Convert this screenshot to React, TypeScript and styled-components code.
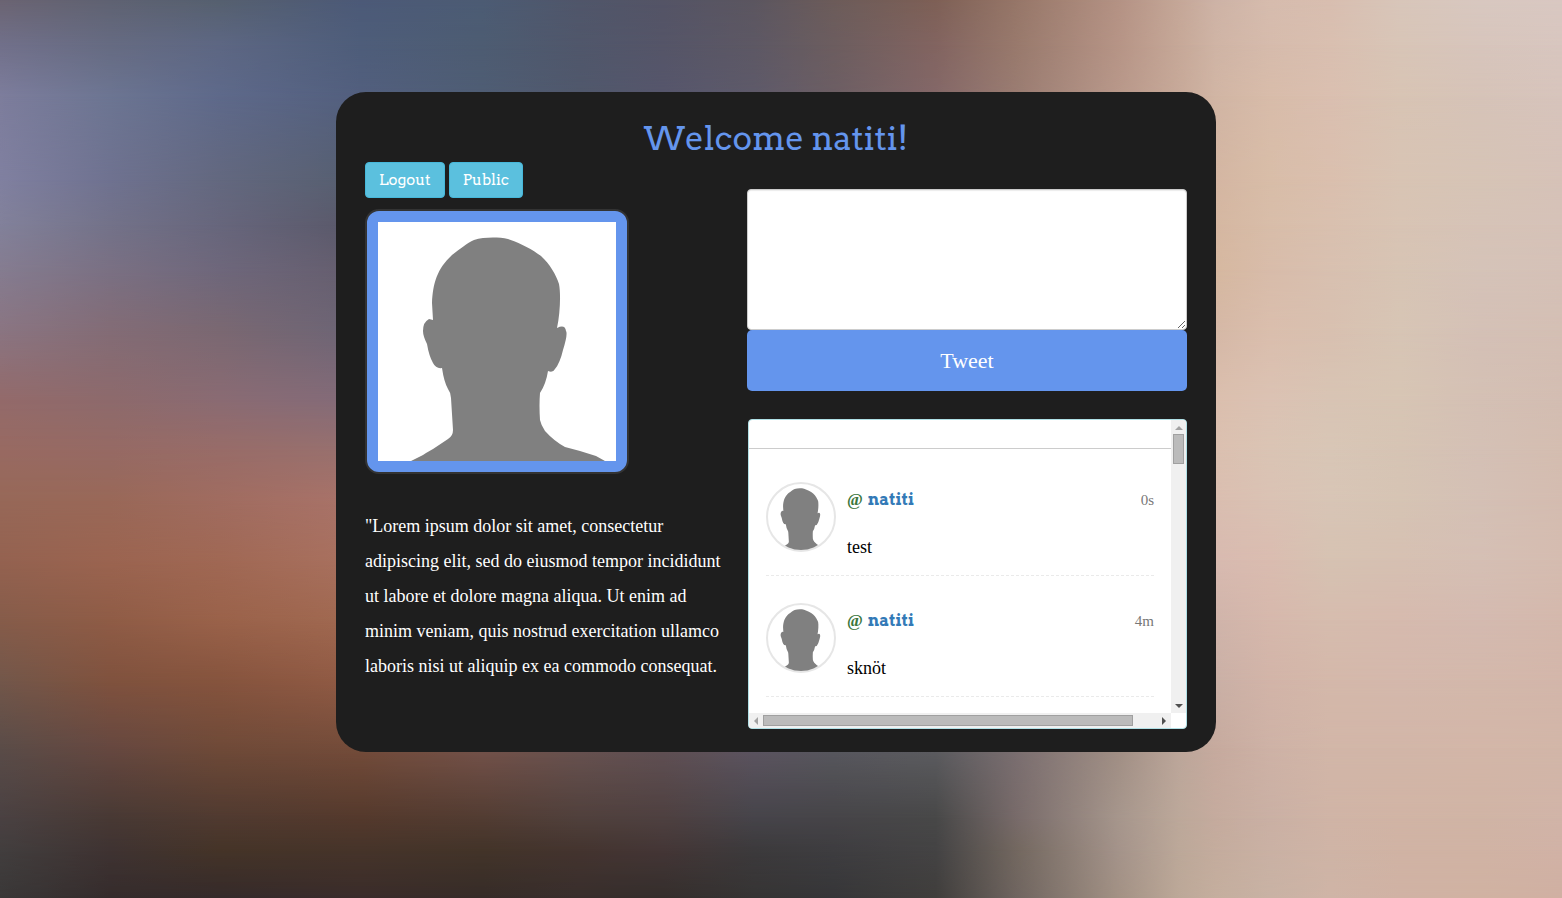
import React from "react";
import styled, { createGlobalStyle } from "styled-components";

const serif = '"Liberation Serif", "Times New Roman", serif';
const slab = 'Arvo, "DejaVu Serif", serif';

const GlobalStyle = createGlobalStyle`
  *, *::before, *::after { box-sizing: border-box; }
  body { margin: 0; font-family: ${serif}; background: #5c5460; }
  button, textarea { font-family: inherit; }
`;

/* Colour rows of the blurred backdrop: vertical position, horizontal stops, colours (px in a 1562x898 frame). */
type Row = { y: number; xs: number[]; colors: string };
const full = [0, 110, 220, 360, 482, 579, 663, 754, 833, 936, 1015, 1118, 1179, 1216, 1270, 1330, 1400, 1480, 1562];
const sides = [0, 110, 220, 336, 1216, 1270, 1330, 1400, 1480, 1562];
const rows: Row[] = [
  { y: 0, xs: full, colors: "6b6472 5f6272 56606f 4c5a78 4c5c74 50566a 545466 5c5660 6c5c5a 7e6056 967668 b49284 c5a798 ceb3a6 d6bcae d8beb0 d8c6ba d8c8c0 d9c8c2" },
  { y: 45, xs: full, colors: "71708a 666b82 5d6783 4e5d7a 4d5c72 50576b 555568 5d5864 6c5d5f 826460 98796c b69486 c6a898 cfb4a5 d6bbac d9bfb0 d8c5b7 d7c5bc d8c6bf" },
  { y: 96, xs: full, colors: "7d7d9c 6c7592 5e698a 525f7e 4f5d74 50586c 56566c 5e5a6a 6c5e64 846868 9a7c72 b8988a c7a999 d1b5a4 d8bcaa dabfb0 d8c4b4 d6c3b8 d7c4bc" },
  { y: 180, xs: sides, colors: "8080a0 6f7290 63687f 586072 d4b6a2 d8bda8 dabfae d8c4b4 d6c4b6 d6c2b8" },
  { y: 225, xs: sides, colors: "82819a 737289 67667c 5b5a6c d5b7a1 d8bda9 d9c0af d8c4b4 d6c3b7 d6c2b8" },
  { y: 270, xs: sides, colors: "857c90 7a7083 6e677b 665f70 d6b8a0 d8bcaa d8c0b0 d7c4b4 d5c3b8 d5c1b7" },
  { y: 330, xs: sides, colors: "8a7582 836c76 7a6872 6e6575 d5b8a6 dabead d8c0b0 d7c5b5 d4c0b6 d4bfb4" },
  { y: 400, xs: sides, colors: "936a6a 8d6a6c 8a6b73 846b78 dbbfae dbc2b3 d8c4b4 d7c5b4 d4c0b4 d3bdb2" },
  { y: 450, xs: sides, colors: "986a62 966a64 986c68 98706e dbc0b0 dac4b4 d8c6b6 d6c4b4 d4c0b5 d4bdb0" },
  { y: 500, xs: sides, colors: "976858 996858 a06c60 a87268 dabeb0 dac2b4 d8c5b6 d6c4b4 d4c0b5 d4bcb0" },
  { y: 560, xs: sides, colors: "946250 9b6450 a06854 a8705e d8bab0 dabcb0 d6c2b2 d6c0b2 d5bfb4 d5bcb0" },
  { y: 620, xs: sides, colors: "865c4a 8f5c46 9a624a a06850 d0b4aa d6b8ac d6bcae d6baae d4bab0 d4b8ac" },
  { y: 680, xs: sides, colors: "73574a 80523e 86543e 905a44 cab0a6 d2b4a8 d4b8aa d4b8ac d3b8ab d3b6aa" },
  { y: 748, xs: full, colors: "5a4c48 664840 6f4a38 744c3a 74524a 685250 605054 5c5460 58585e 5c5c60 7a6e70 a08e84 bca69a c6aa9e ceb2a6 d2b6a8 d2b6a8 d3b6a8 d2b6a8" },
  { y: 818, xs: full, colors: "4a4142 483934 503a30 54392c 523c32 50403c 4e4040 46444a 464448 484848 776a69 a6968c bca89a c5ab9e cab0a4 d0b4a6 d1b4a5 d0b4a5 d1b4a8" },
  { y: 850, xs: full, colors: "423e3e 3f3332 453428 46342a 433429 44342f 443636 3c3a3c 3e3d40 444344 72675f a4938a bca899 c4ac9d cab1a4 cfb4a6 d0b3a4 d0b3a4 d1b2a6" },
  { y: 898, xs: full, colors: "3a3838 352c2c 352a2a 3a2c2a 362c28 382e2c 342e2c 363434 363638 403e3c 6e645f a29184 bca898 c4ae9e c8b2a4 ceb4a6 d0b2a4 d0b2a2 d0b0a2" },
];

const percent = (value: number, total: number) => ((value / total) * 100).toFixed(2) + "%";

const bandGradient = ({ xs, colors }: Row) => {
  const list = colors.split(" ");
  return `linear-gradient(to right, ${xs.map((x, i) => `#${list[i]} ${percent(x, 1562)}`).join(", ")})`;
};

const Backdrop = styled.div`
  position: fixed;
  inset: 0;
  z-index: -1;
  display: grid;
`;

const Band = styled.div<{ $row: Row; $from: number }>`
  grid-area: 1 / 1;
  background: ${({ $row }) => bandGradient($row)};
  ${({ $row, $from }) =>
    $row.y > 0 &&
    `mask-image: linear-gradient(to bottom, transparent ${percent($from, 898)}, #000 ${percent($row.y, 898)});`}
`;

const Page = styled.main`
  display: flex;
  justify-content: center;
  padding: 92px 10px 92px 0;
`;

const Card = styled.section`
  width: 100%;
  max-width: 880px;
  padding: 24px 29px 23px;
  border-radius: 30px;
  background: #1e1e1e;
`;

const Title = styled.h1`
  margin: 0 0 1px;
  font: 400 33px/45px ${slab};
  text-align: center;
  color: #6495ed;
`;

const Columns = styled.div`
  display: grid;
  grid-template-columns: minmax(0, 1fr) minmax(0, 440px);
  gap: 24px;
`;

const Nav = styled.nav`
  display: flex;
  gap: 4px;
`;

const NavButton = styled.button`
  height: 36px;
  padding: 0 13px;
  border: 1px solid #46b8da;
  border-radius: 4px;
  background: #5bc0de;
  color: #fff;
  font: 400 15px/20px ${slab};
`;

const Portrait = styled.div`
  width: 264px;
  margin-top: 11px;
  padding: 11px;
  border: 2px solid #333;
  border-radius: 14px;
  background: #6495ed;

  svg { display: block; width: 100%; background: #fff; }
`;

const Bio = styled.p`
  margin: 35px 0 0;
  font-size: 18px;
  line-height: 35px;
  color: #fff;
`;

const Side = styled.div`
  padding-top: 27px;
`;

const Form = styled.form`
  display: flex;
  flex-direction: column;
  margin-bottom: 28px;
`;

const Message = styled.textarea`
  height: 141px;
  padding: 6px 12px;
  border: 1px solid #ccc;
  border-radius: 4px;
  background: #fff;
  box-shadow: inset 0 1px 1px rgba(0, 0, 0, 0.08);
  font-size: 18px;
  resize: vertical;
`;

const TweetButton = styled.button`
  height: 61px;
  border: 0;
  border-radius: 5px;
  background: #6495ed;
  color: #fff;
  font-size: 22px;
`;

const Feed = styled.section`
  display: grid;
  grid-template: 293px 15px / minmax(0, 1fr) 15px;
  margin-left: 1px;
  border: 1px solid #b0e0e6;
  border-radius: 4px;
  background: #fff;
  overflow: hidden;
`;

const FeedView = styled.div`
  overflow: hidden;
`;

const FeedHead = styled.div`
  height: 29px;
  border-bottom: 1px solid #ccc;
`;

const Posts = styled.ul`
  margin: 0;
  padding: 6px 17px 0;
  list-style: none;
`;

const Post = styled.li`
  display: flex;
  gap: 11px;
  height: 121px;
  padding-top: 27px;
  border-bottom: 1px dashed #eaeaea;
`;

const Thumb = styled.div`
  flex: none;
  width: 70px;
  height: 70px;
  border: 2px solid #e6e6e6;
  border-radius: 50%;
  overflow: hidden;

  svg { display: block; width: 100%; height: 100%; }
`;

const PostBody = styled.div`
  flex: 1;
`;

const PostHead = styled.div`
  display: flex;
  align-items: baseline;
  padding-top: 6px;
  line-height: 24px;
`;

const At = styled.span`
  margin-right: 5px;
  font-size: 17px;
  font-weight: 700;
  color: #3c763d;
`;

const Author = styled.a`
  font: 700 16px/24px ${slab};
  color: #337ab7;
  text-decoration: none;
`;

const Age = styled.time`
  margin-left: auto;
  font-size: 15px;
  color: #777;
`;

const PostText = styled.p`
  margin: 23px 0 0;
  font-size: 18px;
  line-height: 24px;
  color: #000;
`;

const Track = styled.div<{ $vertical?: boolean }>`
  display: flex;
  flex-direction: ${({ $vertical }) => ($vertical ? "column" : "row")};
  align-items: center;
  background: #f0f0f0;
`;

const Arrow = styled.button`
  display: flex;
  align-items: center;
  justify-content: center;
  flex: none;
  width: 14px;
  height: 14px;
  padding: 0;
  border: 0;
  background: none;

  svg { display: block; }
`;

const Grip = styled.div<{ $vertical?: boolean }>`
  width: ${({ $vertical }) => ($vertical ? "11px" : "370px")};
  height: ${({ $vertical }) => ($vertical ? "30px" : "11px")};
  border: 1px solid #a0a0a0;
  background: #bbb;
`;

const Spacer = styled.div`
  flex: 1;
`;

const silhouette =
  "M33 239 L45 233 L48 231 L55 227 L70 217 Q75 214 75 208 L73 176 Q73 171 70 167 Q66 160 64 146 Q58 147 55 141 Q51 134 49 122 Q45 114 45 109 Q45 100 51 97 L55 98 L54 81 C55 61 59 47 74 33 C82 27 89 21 96 18 C106 15 120 15 130 17 C142 21 154 27 163 34 C172 42 178 53 181 62 C183 72 182 92 179 106 Q187 102 188 109 Q190 112 185 128 Q182 141 177 147 Q175 151 170 149 Q168 162 162 171 Q161 183 162 198 Q163 203 167 209 Q176 219 187 225 L202 229 L218 234 L227 239 Z";

const Silhouette = ({ label }: { label: string }) => (
  <svg viewBox="0 0 238 239" role="img" aria-label={label}>
    <path d={silhouette} fill="#808080" />
  </svg>
);

const arrowPaths = {
  up: "M4 1 L8 5 H0 Z",
  down: "M0 0 H8 L4 4 Z",
  left: "M0 4 L4 0 V8 Z",
  right: "M0 0 L4 4 L0 8 Z",
};

const ScrollArrow = ({ dir, color }: { dir: keyof typeof arrowPaths; color: string }) => {
  const upright = dir === "up" || dir === "down";
  return (
    <Arrow type="button" aria-label={`Scroll ${dir}`}>
      <svg width={upright ? 8 : 4} height={upright ? 5 : 8}>
        <path d={arrowPaths[dir]} fill={color} />
      </svg>
    </Arrow>
  );
};

const posts = [
  { author: "natiti", age: "0s", text: "test" },
  { author: "natiti", age: "4m", text: "sknöt" },
];

export default function App() {
  return (
    <>
      <GlobalStyle />
      <Backdrop aria-hidden>
        {rows.map((row, i) => (
          <Band key={row.y} $row={row} $from={i ? rows[i - 1].y : 0} />
        ))}
      </Backdrop>
      <Page>
        <Card>
          <Title>Welcome natiti!</Title>
          <Columns>
            <div>
              <Nav>
                <NavButton type="button">Logout</NavButton>
                <NavButton type="button">Public</NavButton>
              </Nav>
              <Portrait>
                <Silhouette label="Profile picture" />
              </Portrait>
              <Bio>
                "Lorem ipsum dolor sit amet, consectetur adipiscing elit, sed do eiusmod tempor incididunt ut labore et
                dolore magna aliqua. Ut enim ad minim veniam, quis nostrud exercitation ullamco laboris nisi ut aliquip
                ex ea commodo consequat.
              </Bio>
            </div>
            <Side>
              <Form onSubmit={(event) => event.preventDefault()}>
                <Message aria-label="Your tweet" />
                <TweetButton type="submit">Tweet</TweetButton>
              </Form>
              <Feed aria-label="Tweets">
                <FeedView>
                  <FeedHead />
                  <Posts>
                    {posts.map((post) => (
                      <Post key={post.age}>
                        <Thumb>
                          <Silhouette label={post.author} />
                        </Thumb>
                        <PostBody>
                          <PostHead>
                            <At>@</At>
                            <Author href="#">{post.author}</Author>
                            <Age>{post.age}</Age>
                          </PostHead>
                          <PostText>{post.text}</PostText>
                        </PostBody>
                      </Post>
                    ))}
                  </Posts>
                </FeedView>
                <Track $vertical>
                  <ScrollArrow dir="up" color="#a3a3a3" />
                  <Grip $vertical />
                  <Spacer />
                  <ScrollArrow dir="down" color="#505050" />
                </Track>
                <Track>
                  <ScrollArrow dir="left" color="#a3a3a3" />
                  <Grip />
                  <Spacer />
                  <ScrollArrow dir="right" color="#505050" />
                </Track>
              </Feed>
            </Side>
          </Columns>
        </Card>
      </Page>
    </>
  );
}
